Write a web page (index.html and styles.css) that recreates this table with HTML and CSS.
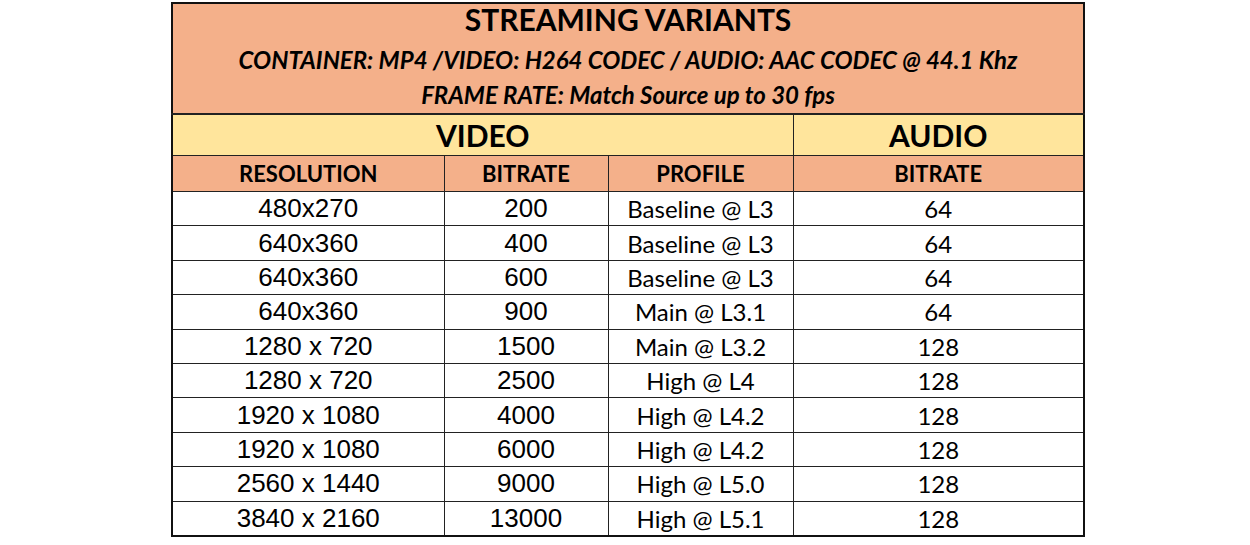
FILE: index.html
```html
<!DOCTYPE html>
<html>
<head>
<meta charset="utf-8">
<link rel="stylesheet" href="styles.css">
</head>
<body>
<div class="sheet">
<table class="variants">
  <colgroup>
    <col class="c-res"><col class="c-vbr"><col class="c-prof"><col class="c-abr">
  </colgroup>
  <thead>
    <tr class="title-row">
      <th colspan="4">
        <div class="title-block">
          <div class="t1">STREAMING VARIANTS</div>
          <div class="t2">CONTAINER: MP4 /VIDEO: H264 CODEC / AUDIO: AAC CODEC @ 44.1 Khz</div>
          <div class="t3">FRAME RATE: Match Source up to 30 fps</div>
        </div>
      </th>
    </tr>
    <tr class="group-row">
      <th colspan="3">VIDEO</th>
      <th>AUDIO</th>
    </tr>
    <tr class="head-row">
      <th>RESOLUTION</th>
      <th>BITRATE</th>
      <th>PROFILE</th>
      <th>BITRATE</th>
    </tr>
  </thead>
  <tbody>
    <tr><td class="num">480x270</td><td class="num">200</td><td class="cal">Baseline @ L3</td><td class="cal">64</td></tr>
    <tr><td class="num">640x360</td><td class="num">400</td><td class="cal">Baseline @ L3</td><td class="cal">64</td></tr>
    <tr><td class="num">640x360</td><td class="num">600</td><td class="cal">Baseline @ L3</td><td class="cal">64</td></tr>
    <tr><td class="num">640x360</td><td class="num">900</td><td class="cal">Main @ L3.1</td><td class="cal">64</td></tr>
    <tr><td class="num">1280 x 720</td><td class="num">1500</td><td class="cal">Main @ L3.2</td><td class="cal">128</td></tr>
    <tr><td class="num">1280 x 720</td><td class="num">2500</td><td class="cal">High @ L4</td><td class="cal">128</td></tr>
    <tr><td class="num">1920 x 1080</td><td class="num">4000</td><td class="cal">High @ L4.2</td><td class="cal">128</td></tr>
    <tr><td class="num">1920 x 1080</td><td class="num">6000</td><td class="cal">High @ L4.2</td><td class="cal">128</td></tr>
    <tr><td class="num">2560 x 1440</td><td class="num">9000</td><td class="cal">High @ L5.0</td><td class="cal">128</td></tr>
    <tr><td class="num">3840 x 2160</td><td class="num">13000</td><td class="cal">High @ L5.1</td><td class="cal">128</td></tr>
  </tbody>
</table>
</div>
</body>
</html>
```

FILE: styles.css
```css
html, body {
  margin: 0;
  padding: 0;
  background: #ffffff;
}

.sheet {
  margin: 2px 0 0 171px;
  width: 914px;
  background: linear-gradient(to bottom, #f4b08a 0, #f4b08a 188px, #fff2b8 188px, #fff2b8 100%);
}

.variants {
  border-collapse: collapse;
  border: 2px solid #111;
  width: 912px;
  table-layout: fixed;
  color: #000;
}

.c-res { width: 272px; }
.c-vbr { width: 164px; }
.c-prof { width: 185px; }
.c-abr { width: 291px; }

.variants th,
.variants td {
  border: 1px solid #222;
  padding: 0;
  text-align: center;
  vertical-align: middle;
}

.title-row th {
  background: #f4b08a;
  height: 109px;
  vertical-align: top;
}

.title-block {
  display: flex;
  flex-direction: column;
  align-items: center;
  font-family: Lato, "Open Sans", sans-serif;
  font-weight: 700;
}

.t1 {
  font-size: 30px;
  line-height: 30px;
}

.t2 {
  font-style: italic;
  font-size: 24px;
  line-height: 40px;
  margin-top: 6px;
}

.t3 {
  font-style: italic;
  font-size: 24px;
  line-height: 30px;
}

.group-row th {
  background: #ffe59c;
  height: 40px;
  font-family: Lato, "Open Sans", sans-serif;
  font-weight: 700;
  font-size: 30px;
  border-top: 2px solid #222;
}

.head-row th {
  background: #f4b08a;
  height: 35px;
  font-family: Lato, "Open Sans", sans-serif;
  font-weight: 700;
  font-size: 22px;
}

.variants tbody td {
  height: 33.4px;
  background: #ffffff;
}

.num {
  font-family: "Liberation Sans", Arial, sans-serif;
  font-size: 26px;
}

.cal {
  font-family: Lato, "Open Sans", sans-serif;
  font-size: 24px;
}
```
